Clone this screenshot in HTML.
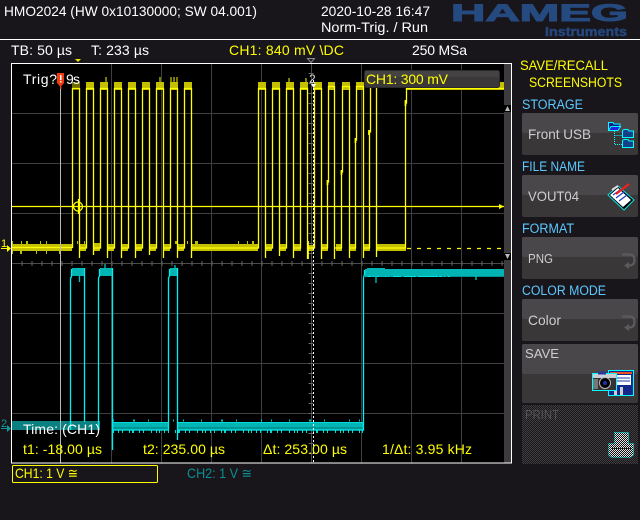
<!DOCTYPE html>
<html><head><meta charset="utf-8"><style>
html,body{margin:0;padding:0;background:#19161b;width:640px;height:520px;overflow:hidden}
svg{display:block;position:absolute;left:0;top:0}
text{font-family:"Liberation Sans",sans-serif;font-size:14px;fill:#fff}
.y{fill:#ffff00}.b{fill:#5cc8ff}.g{fill:#cfcdcf}
.m{font-size:13.500px}
</style></head><body>
<svg width="640" height="520" viewBox="0 0 640 520" xmlns="http://www.w3.org/2000/svg">
<defs>
<pattern id="ck" width="2" height="2" patternUnits="userSpaceOnUse"><rect width="2" height="2" fill="#19171a"/><rect width="1" height="1" fill="#403e40"/><rect x="1" y="1" width="1" height="1" fill="#403e40"/></pattern>
<pattern id="ck2" width="2" height="2" patternUnits="userSpaceOnUse"><rect width="2" height="2" fill="#111"/><rect width="1" height="1" fill="#e4e4e4"/><rect x="1" y="1" width="1" height="1" fill="#e4e4e4"/></pattern>
</defs>
<rect width="640" height="520" fill="#19161b"/>
<!-- header -->
<text x="4" y="16" textLength="253" lengthAdjust="spacingAndGlyphs">HMO2024 (HW 0x10130000; SW 04.001)</text>
<text x="321" y="16" textLength="109" lengthAdjust="spacingAndGlyphs">2020-10-28 16:47</text>
<text x="321" y="32" textLength="107" lengthAdjust="spacingAndGlyphs">Norm-Trig. / Run</text>
<text x="451" y="21" textLength="177" lengthAdjust="spacingAndGlyphs" style="font-size:24px;font-weight:bold;fill:#244a80;stroke:#244a80;stroke-width:1">HAMEG</text>
<text x="545" y="36" textLength="82" lengthAdjust="spacingAndGlyphs" style="font-size:13px;font-weight:bold;fill:#24467a;stroke:#24467a;stroke-width:.5">Instruments</text>
<rect x="0" y="39" width="640" height="1" fill="#fff"/>
<text x="11" y="55" textLength="61">TB: 50 µs</text>
<text x="91" y="55" textLength="58">T: 233 µs</text>
<text class="y" x="229" y="55" textLength="115">CH1: 840 mV \DC</text>
<text x="412" y="55" textLength="55">250 MSa</text>
<path d="M75 59h6l-3 3z" fill="#e8e800"/>
<path d="M307.500 58.500h7l-3.500 4z" fill="none" stroke="#8a8a8a"/>
<!-- plot -->
<rect x="11" y="63" width="501" height="400" fill="#000"/>
<rect x="504" y="64" width="7" height="399" fill="#3e3b3f"/>
<g stroke="#3f3f3f" fill="none">
<path d="M111.500 64V463M161.500 64V463M211.500 64V463M261.500 64V463M361.500 64V463M411.500 64V463M461.500 64V463"/>
<path d="M12 113.500H504M12 163.500H504M12 213.500H504M12 313.500H504M12 363.500H504M12 413.500H504"/>
<path d="M12 263.500H504" stroke="#4a4a4a"/>
<path d="M311.500 64V463" stroke="#4a4a4a"/>
<path d="M21.500 263.500H504" stroke="#666" stroke-width="5" stroke-dasharray="1 9"/>
<path d="M311 73V463" stroke="#666" stroke-width="5" stroke-dasharray="1 9"/>
</g>
<!-- yellow bands -->
<g fill="#c4c000">
<rect x="12" y="244" width="60" height="7"/>
<rect x="80" y="244" width="6" height="7"/><rect x="94" y="243" width="6" height="8"/><rect x="108" y="244" width="6" height="7"/><rect x="122" y="244" width="6" height="7"/><rect x="136" y="244" width="6" height="7"/><rect x="150" y="244" width="6" height="7"/><rect x="164" y="244" width="6" height="7"/><rect x="178" y="244" width="6" height="7"/>
<rect x="192" y="244" width="66" height="7"/>
<rect x="266" y="244" width="6" height="7"/><rect x="280" y="244" width="6" height="7"/><rect x="294" y="244" width="7" height="7"/><rect x="308" y="245" width="6" height="6"/><rect x="322" y="244" width="6" height="7"/><rect x="336" y="244" width="6" height="7"/><rect x="350" y="244" width="6" height="7"/><rect x="364" y="244" width="6" height="7"/>
<rect x="377" y="244" width="29" height="7"/>
<rect x="86" y="82" width="8" height="8"/><rect x="100" y="82" width="8" height="8"/><rect x="114" y="82" width="8" height="8"/><rect x="128" y="82" width="8" height="8"/><rect x="142" y="82" width="8" height="8"/><rect x="156" y="82" width="8" height="8"/><rect x="170" y="82" width="8" height="8"/><rect x="184" y="82" width="8" height="8"/>
<rect x="258" y="82" width="8" height="8"/><rect x="272" y="82" width="8" height="8"/><rect x="286" y="82" width="8" height="8"/><rect x="300" y="82" width="8" height="8"/><rect x="314" y="82" width="8" height="8"/><rect x="328" y="82" width="7" height="8"/><rect x="342" y="82" width="8" height="8"/><rect x="356" y="82" width="8" height="8"/>
<rect x="407" y="86" width="97" height="4"/><rect x="498" y="82" width="6" height="6"/>
</g>
<rect x="72" y="82" width="8" height="8" fill="#6f6c00"/>
<!-- yellow noise -->
<path d="M12 242.500H258" stroke="#c0bc00" stroke-width="3" stroke-dasharray="1 8 1 4 2 12 1 5 1 30 1 6 1 90 2 10 1 7 3 40"/>
<path d="M12 252.500H72" stroke="#c0bc00" stroke-width="3" stroke-dasharray="1 7 2 14 1 9 1 12 1 20"/>
<!-- yellow traces -->
<g fill="none" stroke="#ffff00" stroke-width="1.300">
<path d="M12 247.500H72.500V88.500H79.500V258M79.500 248H86.500V88.500H93.500V255M93.500 248H100.500V88.500H107.500V258M107.500 248H114.500V88.500H121.500V258M121.500 248H128.500V88.500H135.500V258M135.500 248H142.500V88.500H149.500V255M149.500 248H156.500V88.500H163.500V258M163.500 248H170.500V88.500H177.500V258M177.500 248H184.500V88.500H191.500V258M191.500 248H258.500V88.500H265.500V258M265.500 248H272.500V88.500H279.500V256M279.500 248H286.500V88.500H293.500V258M293.500 248H300.500V88.500H307.500V259M307.500 248H314.500V88.500H321.500V259M321.500 248H327.500V182H328.500V86.500H334.500V259M334.500 248H341.500V172H342.500V86.500H349.500V258M349.500 248H355.500V140H356.500V86.500H363.500V258M363.500 248H369.500V132H370.500V85.500H376.500V257M376.500 248H405.500V103H406.500V88.500H504"/>
<path d="M12 206.500H504" />
<circle cx="78" cy="206.500" r="4.500"/>
<path d="M78.500 199V214"/>
<path d="M407 248.500H504" stroke-dasharray="4 6"/>
<path d="M308 241V259M327.500 180V185M341.500 170V175M355.500 138V143M369 130V135M405.500 100V106" stroke-width="1.800"/>
<path d="M499 204l5 2.500l-5 2.500z" fill="#ffff00" stroke="none"/>
<path d="M106 77V82M160 77V82M171 77V82M174 77V82M177 77V82M289 78V82M306 78V82" stroke="#c0bc00"/>
</g>
<!-- cyan bands -->
<g fill="#00b4b4">
<rect x="72" y="268" width="13" height="8"/>
<rect x="100" y="268" width="13" height="8"/>
<rect x="170" y="268" width="8" height="8"/>
<rect x="365" y="269" width="139" height="8"/>
<rect x="367" y="268" width="18" height="2"/>
<rect x="113" y="422" width="55" height="8"/>
<rect x="178" y="422" width="185" height="8"/>
</g>
<path d="M113 422.500H168M178 422.500H363" stroke="#00dcdc" stroke-width="1" fill="none"/>
<path d="M113 428.500H168M178 428.500H363" stroke="#009494" stroke-width="3" fill="none"/>
<path d="M388 276.500H504" stroke="#009090" fill="none"/>
<path d="M368 276.500H450" stroke="#00e4e4" fill="none" stroke-dasharray="3 2 1 3 2 6 1 2 1 4 8 3 12 2 20 1"/>
<rect x="12" y="421" width="88" height="9" fill="#0a8080"/>
<!-- cyan noise -->
<path d="M113 431.500H363" stroke="#00dcdc" stroke-width="3" stroke-dasharray="1 4 1 3 1 6 1 2 2 5 1 3 1 7 1 4 1 2"/>
<path d="M113 420.500H363" stroke="#00c4c4" stroke-width="2" stroke-dasharray="1 19 2 13 1 24 1 9 1 17"/>
<g fill="none" stroke="#00f0f0" stroke-width="1.300">
<path d="M70.500 430V278L71.500 277V269M84.500 268V422M98.500 430V278L99.500 276V269M112.500 268V450M112.500 430H168.500V278L169.500 276V269M177.500 268V440M177.500 430H363.500V278L364.500 274V270"/>
<path d="M79.500 276V282M105 264V269M175 265V269M376 276V283M476 276V280" stroke="#00c4c4"/>
</g>
<!-- cursors -->
<path d="M60.500 85V463" stroke="#b8b8b8" fill="none"/>
<path d="M313.500 80V463" stroke="#fff" stroke-dasharray="2 2" fill="none"/>
<text x="309" y="83" style="font-size:12px;fill:#ddd">2</text>
<path d="M311 84h5l-2.500 4z" fill="#fff"/>
<!-- border -->
<rect x="11.500" y="63.500" width="500" height="399.500" fill="none" stroke="#fff"/>
<!-- scrollbar arrows -->
<rect x="504" y="105" width="7" height="7" fill="#000"/><path d="M505 111h5l-2.500-5z" fill="#bbb"/>
<rect x="504" y="253" width="7" height="7" fill="#000"/><path d="M505 254h5l-2.500 5z" fill="#bbb"/>
<!-- markers -->
<text x="1" y="247" style="font-size:11px;fill:#ffff00">1</text>
<path d="M1 248.500H8" stroke="#ffff00"/><path d="M7 245l4 3.500l-4 3.500z" fill="#ffff00"/>
<text x="1" y="427" style="font-size:11px;fill:#109a9a">2</text>
<path d="M1 428.500H8" stroke="#109a9a"/><path d="M7 425l4 3.500l-4 3.500z" fill="#109a9a"/>
<!-- overlay labels -->
<text x="23" y="84" textLength="34">Trig?</text>
<text x="66" y="84" textLength="14">9s</text>
<path d="M57 73h7v10l-3.500 4l-3.500-4z" fill="#f03a10"/><rect x="60" y="75" width="1.500" height="5" fill="#fff"/><rect x="60" y="81" width="1.500" height="1.500" fill="#fff"/><rect x="60" y="87" width="1.500" height="2" fill="#f03a10"/>
<rect x="364.500" y="70.500" width="135" height="17" rx="2" fill="#3b3839" stroke="#2a282a"/>
<rect x="365" y="71" width="134" height="6" fill="#454244"/>
<text class="y" x="366" y="84" textLength="82">CH1: 300 mV</text>
<text x="23" y="434" textLength="77">Time: (CH1)</text>
<text class="y" x="23" y="454" textLength="79">t1: -18.00 µs</text>
<text class="y" x="143" y="454" textLength="82">t2: 235.00 µs</text>
<text class="y" x="263" y="454" textLength="84">Δt: 253.00 µs</text>
<text class="y" x="382" y="454" textLength="90">1/Δt: 3.95 kHz</text>
<!-- channels -->
<rect x="12.500" y="465.500" width="145" height="17" rx="1" fill="none" stroke="#ffff00"/>
<text class="y" x="15" y="478" textLength="63" lengthAdjust="spacingAndGlyphs">CH1: 1 V ≅</text>
<text x="187" y="478" textLength="65" lengthAdjust="spacingAndGlyphs" style="fill:#0b8f8f">CH2: 1 V ≅</text>
<!-- menu -->
<text class="y m" x="520" y="70" textLength="88" lengthAdjust="spacingAndGlyphs">SAVE/RECALL</text>
<text class="y m" x="529" y="87" textLength="93" lengthAdjust="spacingAndGlyphs">SCREENSHOTS</text>
<text class="b m" x="522" y="109" textLength="61" lengthAdjust="spacingAndGlyphs">STORAGE</text>
<text class="b m" x="522" y="171" textLength="63" lengthAdjust="spacingAndGlyphs">FILE NAME</text>
<text class="b m" x="522" y="233" textLength="52" lengthAdjust="spacingAndGlyphs">FORMAT</text>
<text class="b m" x="522" y="295" textLength="84" lengthAdjust="spacingAndGlyphs">COLOR MODE</text>
<g>
<rect x="522" y="113" width="116" height="42" rx="2" fill="#3a3739"/><rect x="522" y="113" width="116" height="20" rx="2" fill="#4a474a"/>
<rect x="522" y="175" width="116" height="42" rx="2" fill="#3a3739"/><rect x="522" y="175" width="116" height="20" rx="2" fill="#4a474a"/>
<rect x="522" y="237" width="116" height="42" rx="2" fill="#3a3739"/><rect x="522" y="237" width="116" height="20" rx="2" fill="#4a474a"/>
<rect x="522" y="299" width="116" height="42" rx="2" fill="#3a3739"/><rect x="522" y="299" width="116" height="20" rx="2" fill="#4a474a"/>
<rect x="522" y="344" width="116" height="59" rx="2" fill="#3a3739"/><rect x="522" y="344" width="116" height="30" rx="2" fill="#4a474a"/>
<rect x="522" y="405" width="116" height="59" fill="url(#ck)"/>
</g>
<text class="g" x="528" y="139" textLength="63" lengthAdjust="spacingAndGlyphs">Front USB</text>
<text class="g" x="528" y="201" textLength="51" lengthAdjust="spacingAndGlyphs">VOUT04</text>
<text class="g" x="528" y="263" textLength="25" lengthAdjust="spacingAndGlyphs" style="font-size:13px">PNG</text>
<text class="g" x="528" y="325" textLength="33" lengthAdjust="spacingAndGlyphs">Color</text>
<text class="g" x="525" y="358" textLength="34" lengthAdjust="spacingAndGlyphs" style="font-size:13px">SAVE</text>
<text x="525" y="419" textLength="34" lengthAdjust="spacingAndGlyphs" style="fill:#555355;font-size:13px">PRINT</text>
<!-- folder icon -->
<g stroke="#00ffff" fill="none">
<path d="M614.500 131V144.500H622M614.500 135.500H622" stroke-dasharray="1 1"/>
<path d="M608.500 130.500V122.500H613l1 1.500h6v2.500" fill="#1a1a8a"/>
<path d="M608.500 130.500L611 126.500H620.500L618 130.500Z" fill="#2020e0"/>
<path d="M622.500 137.500V130.500L624 129.500H628L629 131H633.500V137.500Z" fill="#14408a"/>
<path d="M622.500 147.500V140.500L624 139.500H628L629 141H633.500V147.500Z" fill="#14408a"/>
</g>
<!-- notepad icon -->
<g>
<path d="M608 195L618 186L634 200L624 210Z" fill="#000" stroke="#00e8e8"/>
<path d="M610 195L618 188L631 200L623 207Z" fill="#fff"/>
<path d="M613 195L620 190M616 198L624 192M619 201L627 195" stroke="#2040c0" stroke-width="1.300"/>
<path d="M616 194L629 184" stroke="#f02020" stroke-width="2.200"/>
<path d="M612 190L618 186" stroke="#ddd" stroke-width="2"/>
</g>
<!-- refresh arrows -->
<g fill="none" stroke="#5c5a5c" stroke-width="2.200">
<path d="M622 254.500H630Q634.500 255 634.500 260Q634.500 265.500 629 265.500H627"/>
<path d="M622 316.500H630Q634.500 317 634.500 322Q634.500 327.500 629 327.500H627"/>
</g>
<path d="M629 262V269L624 265.500Z" fill="#5c5a5c"/><path d="M629 324V331L624 327.500Z" fill="#5c5a5c"/>
<!-- camera/floppy icon -->
<rect x="608.500" y="370.500" width="25" height="25" fill="#14288c" stroke="#00ffff"/>
<rect x="610" y="372" width="22" height="2" fill="#f05020"/>
<rect x="611" y="375" width="20" height="10" fill="#fff"/>
<path d="M612 378H630M612 381H630" stroke="#1a3aa0"/>
<rect x="614" y="387" width="3" height="8" fill="#ccc"/><rect x="620" y="387" width="3" height="8" fill="#ccc"/>
<rect x="592.500" y="373.500" width="24" height="17" fill="#333" stroke="#00ffff"/>
<rect x="593" y="374" width="23" height="4" fill="#cdcdd4"/>
<rect x="598" y="371.500" width="8" height="3" fill="#223a9a"/>
<circle cx="605" cy="383" r="5.500" fill="#000" stroke="#bbb"/><circle cx="605" cy="383" r="2" fill="#2030b0"/>
<rect x="593" y="379" width="5" height="10" fill="#777"/>
<!-- printer icon -->
<path d="M614.500 432.500H628.500V443.500H633.500V455L630 457.500H612L608.500 455V443.500H614.500Z" fill="url(#ck2)" stroke="#00e8e8" stroke-dasharray="1 1"/>
<path d="M611 448.500H631" stroke="#222" stroke-width="1"/>
</svg>
</body></html>
